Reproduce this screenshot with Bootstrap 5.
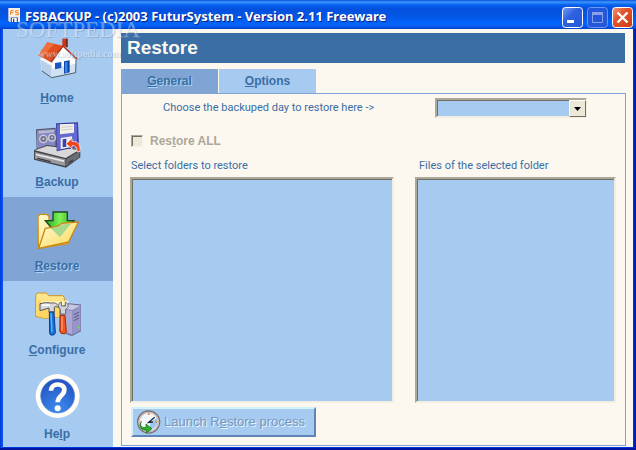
<!DOCTYPE html>
<html lang="en">
<head>
<meta charset="utf-8">
<meta name="viewport" content="width=device-width, initial-scale=1">
<title>FSBACKUP</title>
<link href="https://cdn.jsdelivr.net/npm/bootstrap@5.3.0/dist/css/bootstrap.min.css" rel="stylesheet">
<style>
:root{--ink:#3a6ea5;--sky:#a6caf0;--mid:#80a4d4;--cream:#fcf7ef}
body{font:11px/16px Roboto,"Liberation Sans",sans-serif;color:var(--ink);background:#001ea0}
.window{min-height:100vh;border-bottom:2px solid #0014a0;background:linear-gradient(to right,#0034d8 0,#0a5cf8 3px,#0030d0 3px,#0030d0 calc(100% - 3px),#0038e0 calc(100% - 3px),#001490)}
.titlebar{height:29px;padding:3px 3px 0 7px;background:linear-gradient(#0a4fd8 0,#3c96ff 2px,#0560ee 5px,#0450dd 9px,#0455e4 16px,#0164fb 23px,#0160f6 26px,#0040c8 29px)}
.caption{font:bold 13px/18px "Noto Sans","Open Sans",sans-serif;color:#fff;text-shadow:1px 1px #0a1f80}
.winbtn{width:21px;height:21px;border:0;padding:0;background:none;line-height:0}
.client{margin:0 3px;border-bottom:1px solid #0038e0;background:var(--cream)}
.side{width:110px;background:var(--sky)}
.side a{height:84px;padding:4px 2px 0 0;font:bold 12px/18px "Liberation Sans",sans-serif;color:var(--ink);text-decoration:none}
.side a:last-child{height:80px}
.side a.current{background:var(--mid);text-shadow:1px 1px #a8d4f4}
.side svg{width:48px;height:56px}
.main{padding:4px 7px 1px 8px}
.heading{height:30px;margin-right:1px;padding-left:6px;background:var(--ink);color:var(--cream);font:bold 19px/30px "Liberation Sans",sans-serif}
.tabs{margin-top:6px;gap:1px}
.tabs button{width:97px;height:24px;border:0;padding:0;background:var(--sky);color:var(--ink);font:bold 12px/24px "Liberation Sans",sans-serif}
.tabs button.current{background:var(--mid);text-shadow:1px 1px #a8d4f4}
.pane{border:1px solid var(--mid);padding:4px 9px 8px 8px}
.day{padding:0 29px 0 33px;min-height:20px}
.sunken{border:2px solid;border-color:#aca899 #f1efe2 #f1efe2 #aca899;box-shadow:inset 1px 1px #716f64;border-radius:0;background:var(--sky)}
.combo{width:152px;height:20px}
.combo select{width:100%;height:20px;appearance:none;padding:0 18px 0 4px;color:var(--ink)}
.drop{top:2px;right:1px;width:17px;height:17px;background:#ece9d8;border:1px solid;border-color:#fff #716f64 #716f64 #fff;pointer-events:none}
.drop svg{display:block;width:15px;height:15px}
.all{margin:15px 0 0 1px;gap:7px;min-height:16px;font:bold 12px/16px "Liberation Sans",sans-serif;color:#aca899}
.all input{appearance:none;width:12px;height:12px;margin:0;background:#ece9d8;border:1px solid;border-color:#aca899 #f6f3e6 #f6f3e6 #aca899;box-shadow:inset 1px 1px #716f64}
.lists{display:grid;grid-template-columns:264fr 201fr;column-gap:21px;margin-top:9px}
.lists label{padding-left:1px;margin-bottom:3px}
.lists div + div label{padding-left:4px}
.lists select{width:100%;min-height:80px;overflow:hidden;outline:0}
.launch{margin:4px 0 0 1px;height:30px;width:185px;padding:0 0 0 3px;gap:2px;border:2px solid;border-color:#d4f2fa #5f84ba #5f84ba #d4f2fa;background:var(--sky);color:#7896c0;text-shadow:1px 1px #e4f6fc;font:13px/20px "Liberation Sans",sans-serif}
.brand{left:16px;top:18px;color:#e8eef8;font:23px/24px "Liberation Serif",serif;opacity:.4;text-shadow:1px 1px #8090a8;pointer-events:none}
.brand small{display:block;font:bold 10px/12px "Liberation Serif",serif;margin:6px 0 0 22px}
</style>
<script src="https://cdn.jsdelivr.net/npm/bootstrap@5.3.0/dist/js/bootstrap.bundle.min.js"></script>
</head>
<body>
<div class="window d-flex flex-column position-relative">
  <header class="titlebar d-flex align-items-start">
    <svg class="flex-shrink-0 mt-1" width="14" height="16" viewBox="18 21 42 48" aria-hidden="true"><path fill="#f4efe6" d="M22 24h35v42H26l-4-4z"/><path fill="#fff4e0" d="M24 28h31v18H24z"/><path fill="none" stroke="#ee7d20" stroke-width="3" d="M38 32h-9v13M29 38h8M53 32h-9v6h8v6h-9"/><path fill="#5068a8" d="M29 52h22v14H29z"/><path fill="#fff" d="M33 54h14v12H33z"/><path fill="#445" d="M36 56h4v10h-4z"/></svg>
    <div class="caption flex-grow-1 ms-1 mt-1 text-nowrap">FSBACKUP - (c)2003 FuturSystem - Version 2.11 Freeware</div>
    <div class="d-flex mt-1">
      <button class="winbtn" aria-label="Minimize"><svg width="21" height="21" viewBox="0 0 21 21"><defs><linearGradient id="b" x2="1" y2="1"><stop stop-color="#7ba0f4"/><stop offset=".4" stop-color="#2f62e0"/><stop offset="1" stop-color="#2458d8"/></linearGradient></defs><rect x=".5" y=".5" width="20" height="20" rx="3" fill="url(#b)" stroke="#fff"/><path fill="#fff" d="M5 13h7v3H5z"/></svg></button>
      <button class="winbtn ms-1" aria-label="Maximize" disabled><svg width="21" height="21" viewBox="0 0 21 21"><rect x=".5" y=".5" width="20" height="20" rx="3" fill="#2358dc" stroke="#6c96f0"/><path fill="none" stroke="#8ca0e8" d="M5.500 6v9.500h10V6"/><path fill="#8ca0e8" d="M5 5h11v3H5z"/></svg></button>
      <button class="winbtn ms-1" aria-label="Close"><svg width="21" height="21" viewBox="0 0 21 21"><defs><linearGradient id="r" x2="1" y2="1"><stop stop-color="#f09a7c"/><stop offset=".4" stop-color="#e0532a"/><stop offset="1" stop-color="#cc3c12"/></linearGradient></defs><rect x=".5" y=".5" width="20" height="20" rx="3" fill="url(#r)" stroke="#fff"/><path stroke="#fff" stroke-width="2.400" d="M5.500 5.500l10 10M15.500 5.500l-10 10"/></svg></button>
    </div>
  </header>

  <div class="client d-flex flex-grow-1">
    <nav class="side d-flex flex-column flex-shrink-0" aria-label="Sections">
      <a href="#" class="d-flex flex-column align-items-center">
        <svg viewBox="99 99 144 168" aria-hidden="true"><path fill="#c83818" d="M187 116h15v24h-15z"/><path fill="#7a2410" d="M198 116h5v26h-5z"/><path fill="#eef5fb" d="M120 176l35-28 0 84-30-22z"/><path fill="#b8d0e8" d="M120 178l35 20v34l-29-20z"/><path fill="#fff" d="M155 190l34-50 40 44-4 34-70 14z"/><path fill="#cfe2f4" d="M156 206l70-15-1 27-69 14z"/><path fill="#e25020" d="M142 127l47 10-36 50-38-21z"/><path fill="#f0703c" d="M142 127l20 5-36 40-11-6z"/><path fill="none" stroke="#b03010" stroke-width="4" d="M189 138l43 40M153 186l36-48"/><path fill="#1858c0" d="M165 189l19-3v18l-19 4z"/><path fill="#1048a8" d="M192 184l17-3v36l-17 4z"/><path fill="#3c88e8" d="M195 187l7-2v32l-7 2z"/><path fill="none" stroke="#4c5c68" stroke-width="3" d="M126 213l29 20 72-15 1-38"/></svg>
        <span><u>H</u>ome</span></a>
      <a href="#" class="d-flex flex-column align-items-center">
        <svg viewBox="99 21 144 168" aria-hidden="true"><path fill="#555868" d="M108 58l59-5 5 60-62 5z"/><path fill="#8688c4" d="M111 61l55-4v52l-55 6z"/><path fill="#b8b8d0" d="M116 63l46-4v8l-46 4z"/><g fill="#70748c" stroke="#d0d0dc" stroke-width="4"><circle cx="130" cy="87" r="11"/><circle cx="156" cy="83" r="10"/></g><path fill="#d8d8e0" d="M128 84h5v5h-5zM154 80h5v5h-5z"/><path fill="#45464c" d="M102 120l38-15 101 12v25l-43 31-96-24z"/><path fill="#d8d8d8" d="M105 121l36-13 96 12-40 24z"/><path fill="#9a9a9e" d="M105 126l91 22v20l-91-22z"/><path fill="#6c6c72" d="M199 148l39-24v17l-39 27z"/><path fill="#ececec" d="M108 131l84 20v5l-84-20z"/><path fill="#35353c" d="M112 143l40 10v4l-40-10zM205 157l14-9v4l-14 9z"/><path fill="#3c40a0" d="M168 40l66-3 3 73-67 14z"/><path fill="#6468d0" d="M171 43l60-2v66l-60 13z"/><path fill="#f0f0e8" d="M180 43l42-2v27l-42 5z"/><path stroke="#b8b8b8" stroke-width="2" d="M184 52l34-3M184 60l34-3"/><path fill="#ececf4" d="M182 84l34-5v31l-34 8z"/><path fill="#3c40a0" d="M188 88l11-2v24l-11 2z"/><path fill="#f04418" stroke="#fff" stroke-width="2" d="M198 101l18-16v9c20 0 26 10 24 31h-9c0-12-3-19-15-18v10z"/></svg>
        <span><u>B</u>ackup</span></a>
      <a href="#" class="current d-flex flex-column align-items-center" aria-current="page">
        <svg viewBox="99 18 144 168" aria-hidden="true"><defs><linearGradient id="f" x2="1" y2="1"><stop stop-color="#fffbd8"/><stop offset="1" stop-color="#fcd850"/></linearGradient><linearGradient id="g" x2="1" y2="0"><stop stop-color="#20a818"/><stop offset=".5" stop-color="#80f058"/><stop offset="1" stop-color="#30b020"/></linearGradient></defs><path fill="url(#f)" stroke="#d89010" stroke-width="4" stroke-linejoin="round" d="M115 160l-1-96 6-6h20l7 6v14h55l4 8-2 60z"/><path fill="url(#g)" stroke="#204820" stroke-width="4" d="M159 51h43v26h20l-43 51-43-51h23z"/><path fill="url(#f)" stroke="#c88818" stroke-width="4" stroke-linejoin="round" d="M116 160l20-60 34-5 16-10 49-4-29 60z"/><path fill="#a8d890" d="M152 100l20-3 16-9 25-2-33 41z"/></svg>
        <span><u>R</u>estore</span></a>
      <a href="#" class="d-flex flex-column align-items-center">
        <svg viewBox="99 15 144 168" aria-hidden="true"><path fill="#fce48c" stroke="#cf9420" stroke-width="3" stroke-linejoin="round" d="M107 109V46l6-7h26l8 8h42l4 6v56l-60 6z"/><path fill="#ffd660" d="M113 60h78v50l-60 4-18-5z"/><path fill="#fff2b4" d="M123 62h82v18h-82z"/><path fill="#8884b4" stroke="#55557c" stroke-width="2" d="M180 83l25-12 39 4v77l-29 15-36-14z"/><path fill="#c8c8e4" d="M182 84l24-11 35 4-24 13z"/><path fill="#aaa8d4" d="M182 87l35 6v70l-35-12z"/><path fill="#9896c8" d="M219 93l22-14v71l-22 13z"/><path stroke="#57578c" stroke-width="3" d="M222 104l15-8M222 113l15-8M222 122l15-8"/><circle cx="236" cy="142" r="3" fill="#68e060"/><path fill="#d8d8dc" stroke="#55555c" stroke-width="3" stroke-linejoin="round" d="M120 71l16-3 19 1c12-2 19 4 22 14-8-4-11-4-14-1v14h-16V84l-27 8z"/><path fill="#fff" d="M126 73h24v5h-24z"/><path fill="#d4d4dc" stroke="#686870" stroke-width="3" d="M181 102V88c-9-10-6-20 3-22v12h12V66c11 5 11 15 1 22v14z"/><path fill="#1870d8" stroke="#0c3c88" stroke-width="3" d="M148 96h14l4 63-5 6h-9l-3-5z"/><path fill="#68b4fc" d="M151 99h4l3 58h-4z"/><path fill="#f05420" stroke="#a82c0c" stroke-width="3" d="M181 106h14l4 49-4 6h-11l-4-6z"/><path fill="#ffa068" d="M184 109h4v44h-4z"/></svg>
        <span><u>C</u>onfigure</span></a>
      <a href="#" class="d-flex flex-column align-items-center">
        <svg viewBox="99 21 144 168" aria-hidden="true"><defs><radialGradient id="h" cx=".5" cy=".9" r=".9"><stop stop-color="#3c8cf0"/><stop offset="1" stop-color="#2450c0"/></radialGradient></defs><circle cx="173" cy="102" r="66" fill="#fffdf6"/><circle cx="173" cy="102" r="51" fill="url(#h)" stroke="#5c90d8" stroke-width="2"/><path fill="none" stroke="#fffdf6" stroke-width="14" d="M153 86c0-24 40-24 40-3 0 18-20 18-20 38"/><circle cx="173" cy="139" r="9" fill="#fffdf6"/></svg>
        <span>He<u>l</u>p</span></a>
    </nav>

    <main class="main d-flex flex-column flex-grow-1">
      <h1 class="heading mb-0">Restore</h1>
      <div class="tabs d-flex" role="tablist">
        <button class="current" role="tab" aria-selected="true"><u>G</u>eneral</button>
        <button role="tab" aria-selected="false"><u>O</u>ptions</button>
      </div>
      <section class="pane d-flex flex-column flex-grow-1">
        <div class="day d-flex align-items-center justify-content-between">
          <label for="day">Choose the backuped day to restore here -&gt;</label>
          <div class="combo position-relative"><select id="day" class="sunken d-block"><option></option></select>
            <span class="drop position-absolute"><svg viewBox="0 0 15 15"><path d="M4 6h7L7.500 10z"/></svg></span></div>
        </div>
        <div class="all d-flex align-items-center"><input type="checkbox" id="all" disabled><label for="all">Res<u>t</u>ore ALL</label></div>
        <div class="lists flex-grow-1">
          <div class="d-flex flex-column"><label for="folders">Select folders to restore</label><select id="folders" class="sunken flex-grow-1" multiple></select></div>
          <div class="d-flex flex-column"><label for="files">Files of the selected folder</label><select id="files" class="sunken flex-grow-1" multiple></select></div>
        </div>
        <button class="launch d-flex align-items-center text-nowrap" disabled><svg class="flex-shrink-0" width="26" height="26" viewBox="64 57 78 78" aria-hidden="true"><circle cx="102" cy="96" r="33" fill="#e8f2fa" stroke="#777074" stroke-width="4"/><circle cx="102" cy="96" r="29" fill="#f4f8fc" stroke="#c0b8b8" stroke-width="4"/><path fill="#9cc8f4" d="M106 96l22-12c4 16-5 32-22 36z"/><path fill="#f08020" d="M100 70h5v5h-5zM77 93h5v5h-5zM122 93h5v5h-5z"/><path fill="none" stroke="#223" stroke-width="4" d="M120 82l-18 15 13-1"/><path fill="#30b028" stroke="#106818" stroke-width="2" d="M78 98c-2 13 7 16 16 14v-10l18 14-17 13v-9c-15 1-22-10-17-22z"/></svg><span>Launch R<u>e</u>store process</span></button>
      </section>
    </main>
  </div>
  <div class="brand position-absolute" aria-hidden="true">SOFTPEDIA<small>www.softpedia.com</small></div>
</div>
</body>
</html>
